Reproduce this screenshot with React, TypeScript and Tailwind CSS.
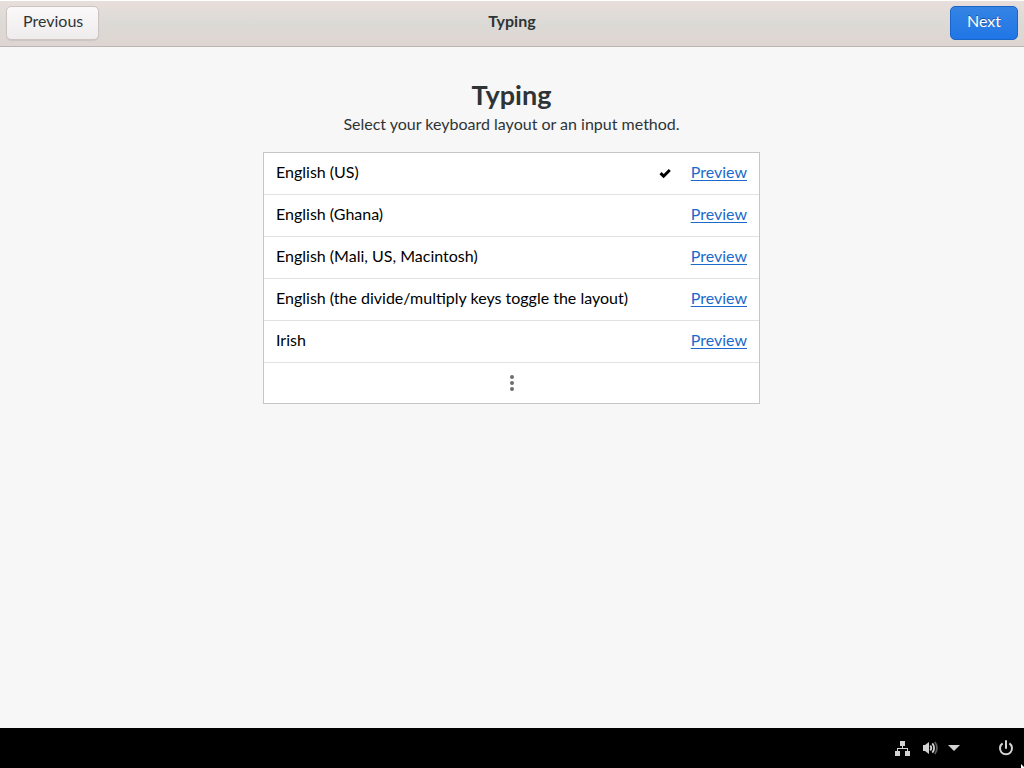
const layouts = [
  { name: 'English (US)', selected: true },
  { name: 'English (Ghana)', selected: false },
  { name: 'English (Mali, US, Macintosh)', selected: false },
  { name: 'English (the divide/multiply keys toggle the layout)', selected: false },
  { name: 'Irish', selected: false },
];

function CheckIcon() {
  return (
    <svg className="mb-0.5" width="16" height="16" viewBox="0 0 16 16" role="img" aria-label="Selected">
      <path d="M3.5 8.2 6.600 11.200 12.800 5" fill="none" stroke="#000" strokeWidth="3" />
    </svg>
  );
}

function MoreIcon() {
  return (
    <svg width="16" height="16" viewBox="0 0 16 16" fill="#6e6e6e" aria-hidden="true">
      <circle cx="8" cy="2" r="2" />
      <circle cx="8" cy="8" r="2" />
      <circle cx="8" cy="14" r="2" />
    </svg>
  );
}

function NetworkIcon() {
  return (
    <svg width="15" height="16" viewBox="0 0 15 16" fill="#d3d3d3" aria-hidden="true">
      <path d="M5 1h5v5H8v2h5v3h2v5h-5v-5h2V9H3v2h2v5H0v-5h2V8h5V6H5z" />
    </svg>
  );
}

function VolumeIcon() {
  return (
    <svg width="16" height="16" viewBox="0 0 16 16" fill="none" aria-hidden="true">
      <path d="M1 5h2L7 2v12l-4-3H1z" fill="#d3d3d3" />
      <path d="M8.300 5.500a4 4 0 0 1 0 5" stroke="#d3d3d3" strokeWidth="1.800" />
      <path d="M10.300 3.300a7 7 0 0 1 0 9.400" stroke="#d3d3d3" strokeWidth="1.800" />
      <path d="M12.800 2a9.500 9.500 0 0 1 0 12" stroke="#5c5c5c" strokeWidth="1.800" />
    </svg>
  );
}

function PowerIcon() {
  return (
    <svg width="16" height="16" viewBox="0 0 16 16" fill="none" stroke="#d3d3d3" strokeWidth="2" aria-hidden="true">
      <path d="M4.600 3.400a6 6 0 1 0 6.800 0" />
      <path d="M8 1v7" strokeLinecap="round" />
    </svg>
  );
}

export default function App() {
  return (
    <div className="flex min-h-screen flex-col bg-[#f7f7f7] font-['Lato',sans-serif] text-base text-[#2e3436]">
      <header className="grid grid-cols-[1fr_auto_1fr] items-start border-t border-b border-t-white border-b-[#bdb5b2] bg-linear-to-b from-[#e8dedc] via-[#dcdad6] to-[#dfd5d2] px-1.5 pt-[5px] pb-1.5">
        <button
          type="button"
          className="h-[34px] justify-self-start rounded-[5px] border border-[#cdc4c1] bg-linear-to-b from-[#faf8f8] to-[#eeecec] pr-[15px] pl-4 pb-1 leading-5 shadow-[0_1px_1px_rgba(0,0,0,0.08)]"
        >
          Previous
        </button>
        <span className="pt-[5px] font-bold leading-5">Typing</span>
        <button
          type="button"
          className="h-[34px] justify-self-end rounded-[5px] border border-[#1b65c8] bg-linear-to-b from-[#3584e4] to-[#1f76e6] px-4 pb-1 leading-5 text-white [text-shadow:0_-1px_rgba(0,0,0,0.4)]"
        >
          Next
        </button>
      </header>

      <main className="flex flex-1 flex-col items-center pt-8 pr-[25px] pl-6">
        <h1 className="text-[27px] font-bold leading-8">Typing</h1>
        <p className="pt-[3px] leading-5">Select your keyboard layout or an input method.</p>
        <ul className="mt-[18px] w-full max-w-[497px] divide-y divide-[#e2e2e2] border border-[#c8c5c4] bg-white text-black">
          {layouts.map((layout) => (
            <li key={layout.name} className="flex h-[42px] items-center px-3">
              <span className="flex-1 pb-1">{layout.name}</span>
              {layout.selected && <CheckIcon />}
              <a
                href="#preview"
                className="ml-[18px] pb-1 text-[#1b6acb] underline decoration-1 underline-offset-2 [text-decoration-skip-ink:none]"
              >
                Preview
              </a>
            </li>
          ))}
          <li>
            <button type="button" aria-label="More layouts" className="flex h-10 w-full items-center justify-center">
              <MoreIcon />
            </button>
          </li>
        </ul>
      </main>

      <footer className="relative flex h-10 items-center justify-end overflow-hidden bg-black pr-2.5">
        <button type="button" aria-label="System menu" className="flex items-center">
          <NetworkIcon />
          <span className="mr-2.5 ml-3">
            <VolumeIcon />
          </span>
          <svg width="12" height="6" viewBox="0 0 12 6" fill="#d3d3d3" aria-hidden="true">
            <path d="M0 0h12L6 6z" />
          </svg>
        </button>
        <button type="button" aria-label="Power" className="ml-[38px]">
          <PowerIcon />
        </button>
        <svg className="absolute right-0 bottom-0" width="3" height="4" viewBox="0 0 3 4" fill="#fff" aria-hidden="true">
          <path d="M0 0 3 3v1H0z" />
        </svg>
      </footer>
    </div>
  );
}
